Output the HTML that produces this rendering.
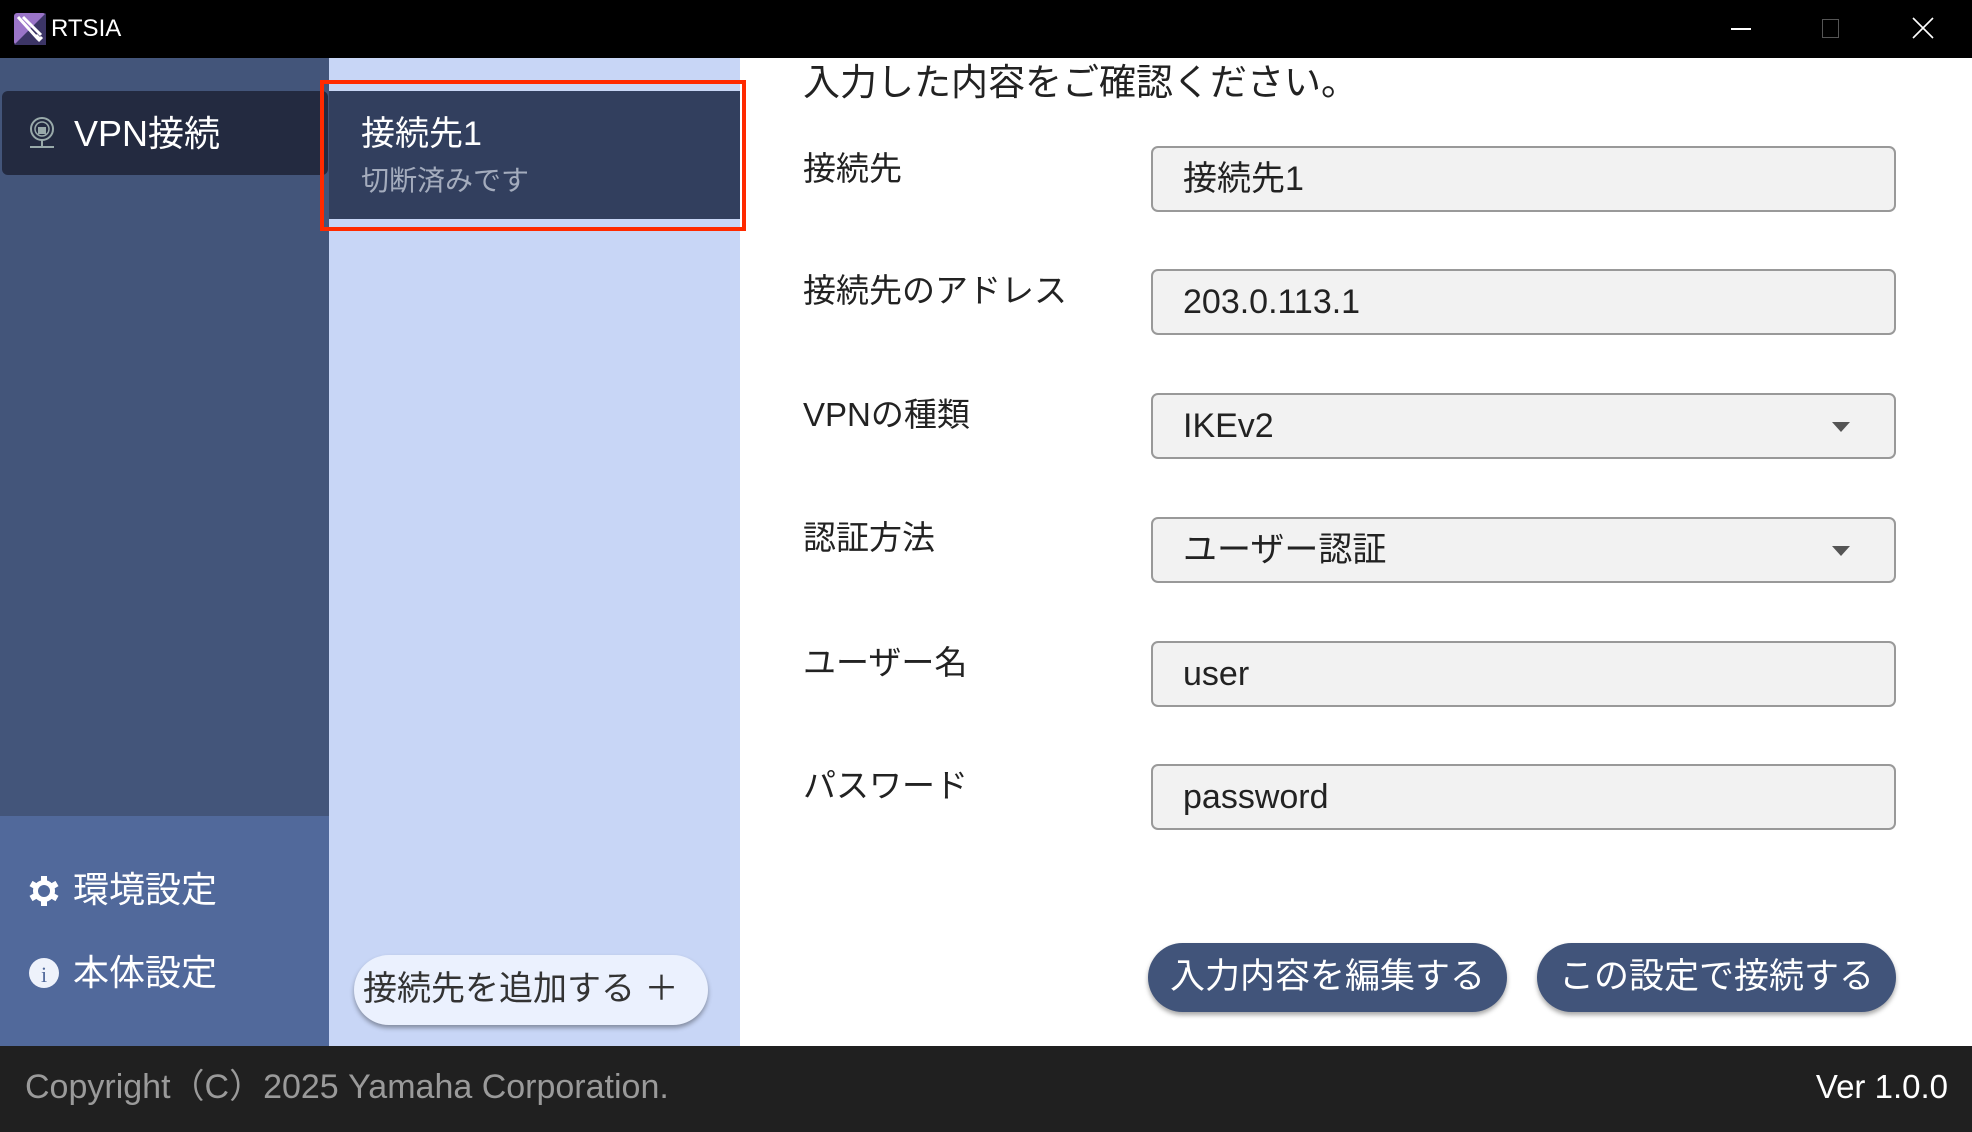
<!DOCTYPE html>
<html><head><meta charset="utf-8"><style>
*{margin:0;padding:0;box-sizing:border-box}
body{width:1972px;height:1132px;overflow:hidden;background:#fff;font-family:"Liberation Sans","Noto Sans CJK JP",sans-serif;position:relative}
.a{position:absolute;white-space:nowrap}
.lbl{position:absolute;left:803px;font-size:33px;color:#222;line-height:40px}
.inp{position:absolute;left:1151px;width:745px;height:66px;background:#f2f2f2;border:2px solid #999;border-radius:7px;font-size:34px;color:#222;line-height:62px;padding-left:30px}
.tri{position:absolute;right:44px;top:27px;width:0;height:0;border-left:9px solid transparent;border-right:9px solid transparent;border-top:10px solid #555}
.btn{position:absolute;top:943px;height:69px;background:#41547a;color:#fff;border-radius:35px;font-size:35px;line-height:67px;text-align:center;box-shadow:0 3px 5px rgba(0,0,0,.35)}
</style></head><body>
<div class="a" style="left:0;top:0;width:1972px;height:58px;background:#000"></div>
<svg class="a" style="left:14px;top:13px" width="32" height="32" viewBox="0 0 32 32"><rect width="32" height="32" rx="3" fill="#9a74c8"/><path d="M0 32L32 0V32Z" fill="#3c3566"/><path d="M4 4L24 26M9 4L27 22M22 22l4 4M24 28l4-4" stroke="#fff" stroke-width="3"/></svg>
<div class="a" style="left:51px;top:14px;font-size:24px;color:#fff;line-height:30px">RTSIA</div>
<div class="a" style="left:1731px;top:28px;width:20px;height:2px;background:#fff"></div>
<div class="a" style="left:1822px;top:19px;width:17px;height:19px;border:1px solid #555"></div>
<svg class="a" style="left:1912px;top:17px" width="22" height="22"><path d="M1 1L21 21M21 1L1 21" stroke="#fff" stroke-width="1.6"/></svg>

<div class="a" style="left:0;top:58px;width:329px;height:758px;background:#43557a"></div>
<div class="a" style="left:0;top:816px;width:329px;height:230px;background:#51699b"></div>
<div class="a" style="left:2px;top:91px;width:326px;height:84px;background:#232a40;border-radius:6px"></div>
<svg class="a" style="left:28px;top:116px" width="28" height="36" viewBox="0 0 28 36"><circle cx="14" cy="13" r="11" fill="none" stroke="#9aa" stroke-width="2"/><circle cx="14" cy="13" r="7" fill="none" stroke="#9aa" stroke-width="1.5"/><rect x="10" y="11" width="8" height="7" fill="#9aa"/><path d="M14 24v6M2 31h24" stroke="#9aa" stroke-width="2"/></svg>
<div class="a" style="left:74px;top:111px;font-size:36px;color:#fff;line-height:46px">VPN接続</div>
<svg class="a" style="left:28px;top:874px" width="32" height="34" viewBox="0 0 32 34"><g fill="#fff"><circle cx="16" cy="17" r="11"/><rect x="13" y="2" width="6" height="30"/><rect x="13" y="2" width="6" height="30" transform="rotate(60 16 17)"/><rect x="13" y="2" width="6" height="30" transform="rotate(120 16 17)"/></g><circle cx="16" cy="17" r="6" fill="#51699b"/></svg>
<div class="a" style="left:73px;top:867px;font-size:36px;color:#fff;line-height:46px">環境設定</div>
<svg class="a" style="left:28px;top:957px" width="32" height="32"><circle cx="16" cy="16" r="15" fill="#eef2fb"/><text x="16" y="25" font-size="22" text-anchor="middle" fill="#51699b" font-family="Liberation Serif">i</text></svg>
<div class="a" style="left:73px;top:950px;font-size:36px;color:#fff;line-height:46px">本体設定</div>

<div class="a" style="left:329px;top:58px;width:411px;height:988px;background:#c8d6f6"></div>
<div class="a" style="left:320px;top:80px;width:426px;height:151px;border:4px solid #ff2a00"></div>
<div class="a" style="left:329px;top:91px;width:411px;height:128px;background:#323f5e"></div>
<div class="a" style="left:361px;top:112px;font-size:34px;color:#fff;line-height:44px">接続先1</div>
<div class="a" style="left:361px;top:162px;font-size:28px;color:#a4acbd;line-height:38px">切断済みです</div>
<div class="a" style="left:354px;top:955px;width:354px;height:70px;background:#ebf1fe;border-radius:35px;box-shadow:0 3px 5px rgba(0,0,0,.35);font-size:34px;color:#333;line-height:68px;padding-left:9px">接続先を追加する ＋</div>

<div class="a" style="left:803px;top:60px;font-size:37px;color:#222;line-height:46px">入力した内容をご確認ください。</div>
<div class="lbl" style="top:149px">接続先</div>
<div class="lbl" style="top:271px">接続先のアドレス</div>
<div class="lbl" style="top:395px">VPNの種類</div>
<div class="lbl" style="top:518px">認証方法</div>
<div class="lbl" style="top:643px">ユーザー名</div>
<div class="lbl" style="top:766px">パスワード</div>
<div class="inp" style="top:146px">接続先1</div>
<div class="inp" style="top:269px">203.0.113.1</div>
<div class="inp" style="top:393px">IKEv2<div class="tri"></div></div>
<div class="inp" style="top:517px">ユーザー認証<div class="tri"></div></div>
<div class="inp" style="top:641px">user</div>
<div class="inp" style="top:764px">password</div>
<div class="btn" style="left:1148px;width:359px">入力内容を編集する</div>
<div class="btn" style="left:1537px;width:359px">この設定で接続する</div>

<div class="a" style="left:0;top:1046px;width:1972px;height:86px;background:#202020"></div>
<div class="a" style="left:25px;top:1065px;font-size:34px;color:#9a9a9a;line-height:44px">Copyright（C）2025 Yamaha Corporation.</div>
<div class="a" style="right:24px;top:1065px;font-size:33px;color:#fff;line-height:44px">Ver 1.0.0</div>
</body></html>
